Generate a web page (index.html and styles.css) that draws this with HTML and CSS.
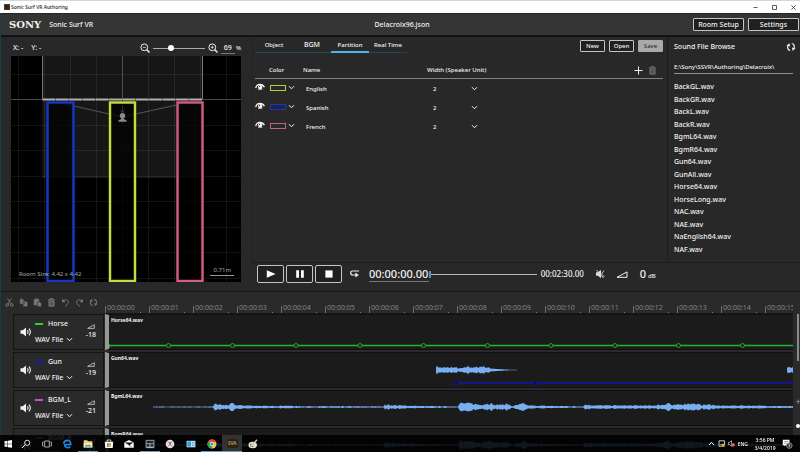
FILE: index.html
```html
<!DOCTYPE html>
<html lang="en">
<head>
<meta charset="utf-8">
<title>Sonic Surf VR Authoring</title>
<link rel="stylesheet" href="styles.css">
</head>
<body>
<svg class="sprite" aria-hidden="true">
  <symbol id="chev" viewBox="0 0 7 7"><path d="M1 2.200 3.500 4.800 6 2.200" fill="none" stroke="currentColor"/></symbol>
  <symbol id="eye" viewBox="0 0 10 8"><path d="M.7 5.200C1.300 2.400 3 1.300 5 1.300S8.600 2.400 9.400 4.200" fill="none" stroke="currentColor" stroke-width="1.300"/><circle cx="5.200" cy="4" r="2.200" fill="currentColor"/><circle cx="4.500" cy="3.400" r=".6" fill="#282828"/><path d="M3 6.300q2 .8 4.500-.2" fill="none" stroke="currentColor" stroke-width=".7"/></symbol>
  <symbol id="trash" viewBox="0 0 8 9"><path d="M.5 1.800h7M2.800 1.500V.6h2.400v.9" fill="none" stroke="currentColor"/><path d="M1 2.500h6V8.600H1z" fill="currentColor"/><path d="M2.700 3.500v4M4 3.500v4M5.300 3.500v4" stroke="#282828" stroke-width=".5"/></symbol>
  <symbol id="refresh" viewBox="0 0 10 10"><path d="M4.200 8.500C1.800 8.200.9 5.400 2.300 3M5.800 1.500C8.200 1.800 9.100 4.600 7.700 7" fill="none" stroke="currentColor" stroke-width="1.200"/><path d="M.5 3.400 3.500 1.200 4 4.500zM9.500 6.600 6.500 8.800 6 5.500z" fill="currentColor"/></symbol>
  <symbol id="speaker" viewBox="0 0 12 10"><path d="M.5 3.200h2.300L6 .6v8.800L2.800 6.800H.5z" fill="currentColor"/><path d="M7.400 3.200q1.300 1.800 0 3.600M9 1.600q2.700 3.400 0 6.800" fill="none" stroke="currentColor" stroke-width="1.100"/></symbol>
  <symbol id="ramp" viewBox="0 0 12 7"><path d="M1 6.300 11 .9v5.400z" fill="none" stroke="currentColor"/></symbol>
  <symbol id="undo" viewBox="0 0 9 9"><path d="M2 2.600C5 1 7.800 2.200 7.300 4.700 7 6.200 5.500 7.400 4 8.200" fill="none" stroke="currentColor"/><path d="M1 .8v3.500h3.500z" fill="currentColor"/></symbol>
</svg>

<header class="titlebar">
  <span class="app-icon"></span>
  <span class="title">Sonic Surf VR Authoring</span>
  <div class="win-controls">
    <button aria-label="Minimize"><svg viewBox="0 0 5 5"><path d="M.5 2.500h4" stroke="#333" stroke-width=".8"/></svg></button>
    <button aria-label="Maximize"><svg viewBox="0 0 5 5"><path d="M.5.5h4v4h-4z" fill="none" stroke="#333" stroke-width=".8"/></svg></button>
    <button aria-label="Close"><svg viewBox="0 0 5 5"><path d="m.4.4 4.200 4.200M4.600.4.4 4.600" stroke="#333" stroke-width=".8"/></svg></button>
  </div>
</header>

<div class="app">
  <div class="brandbar">
    <div class="brand"><span class="logo">SONY</span><span>Sonic Surf VR</span></div>
    <h1>Delacroix96.json</h1>
    <div class="brand-actions"><button class="btn wide">Room Setup</button><button class="btn wide">Settings</button></div>
  </div>

  <main class="workspace">
    <section class="room">
      <div class="room-bar">
        <span class="coords"><span>X: -</span><span>Y: -</span></span>
        <button class="icon-btn" aria-label="Zoom out"><svg class="i10" viewBox="0 0 10 10"><circle cx="4.300" cy="4.300" r="3.400" fill="none" stroke="#eee"/><path d="m6.800 6.800 2.700 2.700" stroke="#eee" stroke-width="1.500"/><path d="M2.800 4.300h3" stroke="#eee" stroke-width=".8"/></svg></button>
        <input class="zoom-range" type="range" min="0" max="100" value="33" aria-label="Zoom">
        <button class="icon-btn" aria-label="Zoom in"><svg class="i10" viewBox="0 0 10 10"><circle cx="4.300" cy="4.300" r="3.400" fill="none" stroke="#eee"/><path d="m6.800 6.800 2.700 2.700" stroke="#eee" stroke-width="1.500"/><path d="M2.800 4.300h3M4.300 2.800v3" stroke="#eee" stroke-width=".8"/></svg></button>
        <input class="zoom-value" id="zoomv" value="69"><label for="zoomv">%</label>
      </div>
      <div class="room-view">
        <svg class="room-map" viewBox="0 0 230 226" preserveAspectRatio="xMidYMid slice">
          <path d="M0 0h230v226H0z"/>
          <path d="M31.500 0h160v122h-160z" fill="#161616"/>
          <path d="M7.500 0v226M33.500 0v226M59.500 0v226M85.500 0v226M111.500 0v226M137.500 0v226M163.500 0v226M189.500 0v226M215.500 0v226M0 18.500h230M0 69.500h230M0 94.500h230M0 120.500h230M0 145.500h230M0 171.500h230M0 196.500h230M0 222.500h230" stroke="#fff" stroke-opacity=".07"/>
          <path d="M0 43.500h230" stroke="#484848"/>
          <path d="M111.500 0v43" stroke="#505050"/>
          <path d="M31.500 43V0M191.500 43V0" stroke="#777" fill="none"/>
          <path d="M31.500 43.500h160" stroke="#b4adb0" stroke-width="2" stroke-dasharray="12.800 .533"/>
          <path d="M50 47 111 61 179 46" fill="none" stroke="#565656"/>
          <path d="M37 46h25v179H37zM99 46h25v179H99zM166 46h25v179h-25z" fill="#000" fill-opacity=".72"/>
          <path d="M36.500 46.500h26v178.500h-26z" fill="none" stroke="#0c1d66" stroke-width="3"/>
          <path d="M36.500 46.500h26v178.500h-26z" fill="none" stroke="#1437c4" stroke-width="2"/>
          <path d="M99 46.500h25v178.500H99z" fill="none" stroke="#5a6a18" stroke-width="3"/>
          <path d="M99 46.500h25v178.500H99z" fill="none" stroke="#bfdf3e" stroke-width="2"/>
          <path d="M166.500 46.500h25v178.500h-25z" fill="none" stroke="#6b2038" stroke-width="3"/>
          <path d="M166.500 46.500h25v178.500h-25z" fill="none" stroke="#d0607f" stroke-width="2"/>
          <path d="M111.500 50v7M109.500 54l2 3 2-3" fill="none" stroke="#333"/>
          <circle cx="111.500" cy="59.800" r="2.700" fill="#8a8a8a"/><path d="M107.500 65.800v-1.600l2.800-1.200v-2h2.400v2l2.800 1.200v1.600z" fill="#8a8a8a"/>
        </svg>
        <span class="room-size">Room Size: 4.42 x 4.42</span>
        <span class="room-scale">0.71m</span>
      </div>
    </section>

    <section class="editor">
      <div class="editor-bar">
        <nav class="tabs"><button>Object</button><button class="big">BGM</button><button class="on">Partition</button><button>Real Time</button></nav>
        <div class="file-actions"><button class="btn">New</button><button class="btn">Open</button><button class="btn save">Save</button></div>
      </div>
      <table class="parts">
        <colgroup><col class="c-eye"><col class="c-color"><col class="c-name"><col class="c-width"><col></colgroup>
        <thead><tr><th></th><th>Color</th><th>Name</th><th>Width (Speaker Unit)</th><th class="row-tools"><button class="icon-btn" aria-label="Add"><svg class="i9" viewBox="0 0 9 9"><path d="M4.500.5v8M.5 4.500h8" stroke="#eee"/></svg></button><button class="icon-btn dim" aria-label="Delete"><svg class="i9"><use href="#trash"/></svg></button></th></tr></thead>
        <tbody>
          <tr><td><button class="icon-btn" aria-label="Show English"><svg class="eye"><use href="#eye"/></svg></button></td><td><button class="swatch lime" aria-label="Color of English"><i></i><svg class="i7"><use href="#chev"/></svg></button></td><td class="d-name">English</td><td class="d-width"><span class="pick"><select aria-label="Width of English"><option>2</option></select><svg class="i7"><use href="#chev"/></svg></span></td><td></td></tr>
          <tr><td><button class="icon-btn" aria-label="Show Spanish"><svg class="eye"><use href="#eye"/></svg></button></td><td><button class="swatch blue" aria-label="Color of Spanish"><i></i><svg class="i7"><use href="#chev"/></svg></button></td><td class="d-name">Spanish</td><td class="d-width"><span class="pick"><select aria-label="Width of Spanish"><option>2</option></select><svg class="i7"><use href="#chev"/></svg></span></td><td></td></tr>
          <tr><td><button class="icon-btn" aria-label="Show French"><svg class="eye"><use href="#eye"/></svg></button></td><td><button class="swatch rose" aria-label="Color of French"><i></i><svg class="i7"><use href="#chev"/></svg></button></td><td class="d-name">French</td><td class="d-width"><span class="pick"><select aria-label="Width of French"><option>2</option></select><svg class="i7"><use href="#chev"/></svg></span></td><td></td></tr>
        </tbody>
      </table>
    </section>

    <aside class="browser">
      <div class="browser-head"><h2>Sound File Browse</h2><button class="icon-btn" aria-label="Refresh"><svg class="i10"><use href="#refresh"/></svg></button></div>
      <input class="path" aria-label="Folder" value="E:\Sony\SSVR\Authoring\Delacroix\">
      <ul class="files"><li>BackGL.wav</li><li>BackGR.wav</li><li>BackL.wav</li><li>BackR.wav</li><li>BgmL64.wav</li><li>BgmR64.wav</li><li>Gun64.wav</li><li>GunAll.wav</li><li>Horse64.wav</li><li>HorseLong.wav</li><li>NAC.wav</li><li>NAE.wav</li><li>NaEnglish64.wav</li><li>NAF.wav</li></ul>
    </aside>

    <section class="transport">
      <button class="btn play" aria-label="Play"><svg class="i10" viewBox="0 0 10 10"><path d="M.8 1.200 9.600 5 .8 8.800z" fill="#fff"/></svg></button>
      <button class="btn play" aria-label="Pause"><svg class="i10" viewBox="0 0 10 10"><path d="M1.200 1.200h2.800v7.600H1.200zM6 1.200h2.800v7.600H6z" fill="#fff"/></svg></button>
      <button class="btn play" aria-label="Stop"><svg class="i10" viewBox="0 0 10 10"><path d="M1.400 1.400h7.200v7.200H1.400z" fill="#fff"/></svg></button>
      <button class="icon-btn loop" aria-label="Loop"><svg class="i10" viewBox="0 0 10 10"><path d="M9 2H2.800Q.7 2 .7 4t2.100 2H6" fill="none" stroke="#eee" stroke-width="1.200"/><path d="M5.400 3.600v4.800L8.800 6z" fill="#eee"/></svg></button>
      <input class="time" aria-label="Position" value="00:00:00.00">
      <input class="seek" type="range" min="0" max="150" value="0" aria-label="Seek">
      <span class="total">00:02:30.00</span>
      <button class="icon-btn mute" aria-label="Mute"><svg class="i10" viewBox="0 0 10 10"><path d="M1 3.200h2L6 .8v8.400L3 6.800H1z" fill="#ddd"/><path d="m1.500 1 7 8M9 1.500 6.500 5 9.500 8" fill="none" stroke="#ddd" stroke-width=".9"/></svg></button>
      <svg class="vol"><use href="#ramp"/></svg>
      <span class="db">0</span><span class="unit">dB</span>
    </section>
  </main>

  <section class="timeline">
    <div class="tl-head">
      <div class="tools">
        <button aria-label="Cut"><svg class="i9" viewBox="0 0 9 9"><path d="M2.500.5 6.200 6M6.500.5 2.800 6" stroke="currentColor"/><circle cx="2.200" cy="7" r="1.300" fill="none" stroke="currentColor"/><circle cx="6.800" cy="7" r="1.300" fill="none" stroke="currentColor"/></svg></button>
        <button aria-label="Copy"><svg class="i9" viewBox="0 0 9 9"><path d="M.8.8h3l1.500 1.500V6.200H.8zM4 3h3l1.700 1.700v4H4z" fill="currentColor" stroke="#292929" stroke-width=".5"/></svg></button>
        <button aria-label="Paste"><svg class="i9" viewBox="0 0 9 9"><path d="M.8 1.300h1.500V.5h2.400v.8h1.500v6H.8z" fill="currentColor"/><path d="M4.200 3.800h2.600l1.800 1.700v3.200H4.200z" fill="currentColor" stroke="#292929" stroke-width=".6"/></svg></button>
        <button aria-label="Delete"><svg class="i9"><use href="#trash"/></svg></button>
        <button aria-label="Undo"><svg class="i9"><use href="#undo"/></svg></button>
        <button aria-label="Redo"><svg class="i9 flip"><use href="#undo"/></svg></button>
        <button aria-label="Repeat"><svg class="i9"><use href="#refresh"/></svg></button>
      </div>
      <ol class="ruler"><li>00:00:00</li><li>00:00:01</li><li>00:00:02</li><li>00:00:03</li><li>00:00:04</li><li>00:00:05</li><li>00:00:06</li><li>00:00:07</li><li>00:00:08</li><li>00:00:09</li><li>00:00:10</li><li>00:00:11</li><li>00:00:12</li><li>00:00:13</li><li>00:00:14</li><li>00:00:15</li></ol>
    </div>
    <div class="tl-body">
      <div class="tracks">
        <article class="track">
          <div class="track-head"><button class="icon-btn" aria-label="Mute Horse"><svg class="spk"><use href="#speaker"/></svg></button>
            <div class="track-info"><span class="track-name"><i class="green"></i>Horse</span><button class="src">WAV File<svg class="i7"><use href="#chev"/></svg></button></div>
            <div class="gain"><svg><use href="#ramp"/></svg>-18</div></div>
          <div class="lane"><span>Horse64.wav</span><svg><path class="marker" d="M0 30q3 2 0 4"/><path d="M0 31.500h4000" stroke="#25b52b" stroke-width="1.500"/><g fill="#152615" stroke="#25a52b"><circle cx="59.500" cy="31.500" r="2"/><circle cx="123.500" cy="31.500" r="2"/><circle cx="187" cy="31.500" r="2"/><circle cx="251" cy="31.500" r="2"/><circle cx="314.500" cy="31.500" r="2"/><circle cx="378.500" cy="31.500" r="2"/><circle cx="442" cy="31.500" r="2"/><circle cx="506" cy="31.500" r="2"/><circle cx="569.500" cy="31.500" r="2"/><circle cx="633.500" cy="31.500" r="2"/></g></svg></div>
        </article>
        <article class="track">
          <div class="track-head"><button class="icon-btn" aria-label="Mute Gun"><svg class="spk"><use href="#speaker"/></svg></button>
            <div class="track-info"><span class="track-name"><i class="navy"></i>Gun</span><button class="src">WAV File<svg class="i7"><use href="#chev"/></svg></button></div>
            <div class="gain"><svg><use href="#ramp"/></svg>-19</div></div>
          <div class="lane"><span>Gun64.wav</span><svg><path class="wave" data-wave="gun"/><path class="wave" data-wave="gunTail"/><path d="M347 31h4000" stroke="#14148a" stroke-width="2"/><circle cx="347" cy="31" r="2" fill="#0c0c50" stroke="#14148a"/><circle cx="426.500" cy="31" r="2" fill="#0c0c50" stroke="#14148a"/></svg></div>
        </article>
        <article class="track">
          <div class="track-head"><button class="icon-btn" aria-label="Mute BGM_L"><svg class="spk"><use href="#speaker"/></svg></button>
            <div class="track-info"><span class="track-name"><i class="pink"></i>BGM_L</span><button class="src">WAV File<svg class="i7"><use href="#chev"/></svg></button></div>
            <div class="gain"><svg><use href="#ramp"/></svg>-21</div></div>
          <div class="lane"><span>BgmL64.wav</span><svg><path class="wave" data-wave="bgm"/></svg></div>
        </article>
        <article class="track">
          <div class="track-head"><button class="icon-btn" aria-label="Mute BGM_R"><svg class="spk"><use href="#speaker"/></svg></button>
            <div class="track-info"><span class="track-name"><i class="pink"></i>BGM_R</span><button class="src">WAV File<svg class="i7"><use href="#chev"/></svg></button></div>
            <div class="gain"><svg><use href="#ramp"/></svg>-21</div></div>
          <div class="lane"><span>BgmR64.wav</span><svg><path class="wave" data-wave="bgm"/></svg></div>
        </article>
      </div>
      <div class="vscroll"><span class="thumb"></span><span class="plus">+</span><span class="knob"></span></div>
    </div>
  </section>
</div>

<footer class="taskbar">
  <div class="apps">
    <button aria-label="Start"><svg viewBox="0 0 10 10"><path d="M1.500 2.300 4.500 1.800v2.900h-3zM5 1.700l4-.6v3.600H5zM1.500 5.200h3v2.900l-3-.5zM5 5.200h4v3.600l-4-.6z" fill="#fff"/></svg></button>
    <button aria-label="Search"><svg viewBox="0 0 10 10"><circle cx="6.200" cy="3.800" r="2.600" fill="none" stroke="#ddd"/><path d="M4.300 5.700 1 9" stroke="#ddd"/></svg></button>
    <button aria-label="Task view"><svg viewBox="0 0 10 10"><path d="M2.700 2h4.600v6H2.700zM1.600 3H.6v4h1M8.400 3h1v4h-1" fill="none" stroke="#bbb" stroke-width=".9"/></svg></button>
    <button aria-label="Edge"><svg viewBox="0 0 10 10"><path d="M2.400 5.700h6.300C8.900 2.900 7.600 1.400 5.300 1.400 3.200 1.400 1.900 2.900 1.500 4.600M2.700 5.200c-.4 3 2.600 4.300 5.600 2.800" fill="none" stroke="#1b86e0" stroke-width="1.700"/></svg></button>
    <button class="open" aria-label="File Explorer"><svg viewBox="0 0 10 10"><path d="M.7 1.300h3.500l.8 1h4.300v6.200H.7z" fill="#f4d374"/><path d="M.7 4h8.600v4.500H.7z" fill="#fbe7a0"/><path d="M2.500 8.700V6h5v2.700H6.300V7.200H3.700v1.500z" fill="#3c9ad8"/></svg></button>
    <button aria-label="Store"><svg viewBox="0 0 10 10"><path d="M.8 2.800h8.400L8.700 9H1.300z" fill="#fff"/><path d="M3.200 2.800V1h3.600v1.800" fill="none" stroke="#fff" stroke-width=".8"/><path d="M3 4.200h1.800v1.700H3z" fill="#e34a2c"/><path d="M5.200 4.200H7v1.700H5.200z" fill="#6ab02c"/><path d="M3 6.300h1.800V8H3z" fill="#2a8fdc"/><path d="M5.200 6.300H7V8H5.200z" fill="#f0b000"/></svg></button>
    <button aria-label="Mail"><svg viewBox="0 0 10 10"><path d="M.3 3.500 5 1l4.700 2.500V8.700H.3z" fill="#fff"/><path d="M.6 3.400h8.800L5.300 6.200z" fill="#111"/><path d="m4.600 5.800 2.800 2" stroke="#111" stroke-width=".6"/></svg></button>
    <button class="open" aria-label="Device panel"><svg viewBox="0 0 10 10"><path d="M.5.800h9v8.400h-9z" fill="#7d868b"/><path d="M1.700 2h6.600v2H1.700z" fill="#22282c"/><circle cx="3" cy="6.300" r="1.200" fill="#25292c"/><circle cx="7" cy="6.300" r="1.200" fill="#25292c"/><path d="M2 8.500h6" stroke="#ddd" stroke-width=".5"/></svg></button>
    <button aria-label="Media tool"><svg viewBox="0 0 10 10"><circle cx="5" cy="5" r="4.300" fill="#e7dfdc"/><path d="M3 2.500 7 7.400M6.900 2.600 3.400 7.200" stroke="#a05048" stroke-width=".8"/><circle cx="5" cy="4" r="1" fill="#777"/></svg></button>
    <button aria-label="Control panel"><svg viewBox="0 0 10 10"><path d="M.6 1.800h8.800v6.500H.6z" fill="#d7effa"/><path d="M1.200 2.400h4v5.200h-4z" fill="#31a2df"/><path d="M6 3.300h2.600M6 5h2.600M6 6.700h2.600" stroke="#31a2df" stroke-width=".9"/></svg></button>
    <button class="open" aria-label="Chrome"><svg viewBox="0 0 10 10"><circle cx="5" cy="5" r="4.500" fill="#f6c632"/><path d="M5 5 1.100 2.750A4.500 4.500 0 0 1 8.900 2.750z" fill="#de4637"/><path d="M5 5 1.100 2.750A4.500 4.500 0 0 0 5 9.500z" fill="#2ba24c"/><circle cx="5" cy="5" r="2.200" fill="#fff"/><circle cx="5" cy="5" r="1.600" fill="#3f82ea"/></svg></button>
    <button class="open current" aria-label="Sonic Surf VR Authoring"><span>SVA</span></button>
    <button aria-label="Paint"><svg viewBox="0 0 10 10"><ellipse cx="4.700" cy="6" rx="4.200" ry="3.200" fill="#e9e5d4"/><circle cx="2.700" cy="5.400" r=".8" fill="#c84c3c"/><circle cx="4.600" cy="7.400" r=".8" fill="#3e8a43"/><circle cx="2.800" cy="7.200" r=".6" fill="#2c74c4"/><path d="M4.500 5.700 9 .8" stroke="#d3c59a" stroke-width="1.500"/></svg></button>
  </div>
  <div class="tray">
    <svg class="i7" viewBox="0 0 7 7"><path d="m1 5 2.500-2.700L6 5" fill="none" stroke="#fff"/></svg>
    <svg class="i7" viewBox="0 0 7 7"><path d="M1 .8h5.500v4H2.300M1 .8v5.500h2" fill="none" stroke="#ddd" stroke-width=".9"/><path d="m5 3.200 2 3.500H3z" fill="#f0c020"/></svg>
    <svg class="i7" viewBox="0 0 7 7"><path d="M.3 2.400h1.200L3.500.7v5.500L1.500 4.600H.3z" fill="none" stroke="#ddd" stroke-width=".7"/><circle cx="5.100" cy="4.800" r="1.900" fill="#dc3030"/><path d="m4.400 4.100 1.400 1.400m0-1.400L4.400 5.500" stroke="#fff" stroke-width=".5"/></svg>
    <span class="lang">ENG</span>
    <span class="clock">3:56 PM<br>3/4/2019</span>
    <svg class="note" viewBox="0 0 11 10"><path d="M.8.8h6.700v5.500H3.600L2.300 7.600V6.300H.8z" fill="#fff"/><path d="M2 2.500h4.300M2 4.200h4.300" stroke="#555" stroke-width=".5"/><circle cx="7.300" cy="6.600" r="2.800" fill="#333" stroke="#ddd" stroke-width=".5"/><path d="m6.600 5.800.8-.6v2.900" fill="none" stroke="#fff" stroke-width=".6"/></svg>
  </div>
</footer>
<script src="script.js"></script>
</body>
</html>
```
FILE: styles.css
```css
* { box-sizing: border-box; margin: 0; padding: 0; }
html, body { height: 100%; }
body {
  display: flex;
  flex-direction: column;
  overflow: hidden;
  background: #282828;
  color: #f2f2f2;
  font: 500 7px/10px "Noto Sans", "Open Sans", sans-serif;
}
button, input, select { font: inherit; color: inherit; background: none; border: 0; outline: 0; border-radius: 0; }
button { display: inline-flex; align-items: center; justify-content: center; }
ul, ol { list-style: none; }
svg { display: block; flex: none; }
h1, h2, th { font: inherit; text-align: left; }
.sprite { position: absolute; width: 0; height: 0; }
.i7 { width: 7px; height: 7px; }
.i9 { width: 9px; height: 9px; }
.i10 { width: 10px; height: 10px; }
.flip { transform: scaleX(-1); }
.btn {
  width: 25px;
  height: 12px;
  border: 1px solid #c4c4c4;
  border-radius: 1px;
  background: #202020;
  font-size: 6px;
}
.btn.wide { width: 51px; height: 13px; font-size: 7px; }
.btn.save { background: #a9a9a9; border-color: #a9a9a9; color: #333; }

.titlebar {
  display: flex;
  align-items: center;
  flex: none;
  height: 13px;
  padding-left: 4px;
  background: #fff;
  border-top: 1px solid #cddae1;
  color: #222;
  font-size: 5px;
}
.app-icon { width: 6px; height: 6px; margin-right: 1px; background: #2c2318; border: 1px solid #4b3c26; }
.win-controls { display: flex; gap: 14px; margin-left: auto; padding-right: 4px; }
.win-controls svg { width: 5px; height: 5px; }

.app { display: flex; flex-direction: column; flex: 1; min-height: 0; border-left: 1px solid #1c3a48; }
.brandbar {
  display: grid;
  grid-template-columns: 1fr auto 1fr;
  align-items: center;
  flex: none;
  height: 24px;
  background: #353535;
  border-top: 1px solid #262626;
  border-bottom: 2px solid #131313;
}
.brandbar h1 { padding-left: 3px; }
.brand { display: flex; align-items: center; gap: 8px; padding-left: 8px; }
.logo { font: bold 10px/10px "DejaVu Serif", serif; }
.brand-actions { display: flex; justify-content: flex-end; gap: 4px; padding-right: 1px; }

.workspace {
  display: grid;
  grid-template-columns: 251px 1fr 133px;
  grid-template-rows: 1fr 29px;
  flex: 1;
  min-height: 0;
}
.room { display: flex; flex-direction: column; grid-row: 1 / 3; min-height: 0; padding: 0 11px 9px 10px; }
.room-bar { display: flex; align-items: center; flex: none; height: 19px; padding-top: 3px; }
.coords { display: flex; gap: 8px; margin-right: auto; padding-left: 2px; }
.room-bar label { font-size: 6px; }
.zoom-range { width: 52px; height: 8px; margin: 0 3px; appearance: none; }
.zoom-range::-webkit-slider-runnable-track { height: 1px; background: #aaa; }
.zoom-range::-webkit-slider-thumb { appearance: none; width: 6px; height: 6px; margin-top: -3px; border-radius: 50%; background: #fff; }
.zoom-value { width: 14px; height: 11px; margin: 0 1px 0 3px; text-align: center; border-bottom: 1px solid #777; }
.room-bar { padding-right: 0; }
.room-view { position: relative; flex: 1; min-height: 0; }
.room-map { width: 100%; height: 100%; }
.room-size, .room-scale { position: absolute; bottom: 3px; color: #aaa; font-size: 6px; font-weight: 400; }
.room-size { left: 8px; }
.room-scale { right: 7px; bottom: 6px; height: 10px; padding: 0 3px; line-height: 9px; border: solid #999; border-width: 0 0 1px; }

.editor { padding: 2px 4px 0 2px; border-left: 1px solid #242424; }
.editor-bar { display: flex; justify-content: space-between; align-items: flex-start; height: 23px; }
.tabs { display: flex; border-bottom: 1px solid #24485a; font-size: 6px; }
.tabs button { width: 38px; height: 14px; padding-bottom: 1px; border-bottom: 2px solid transparent; margin-bottom: -1px; white-space: nowrap; }
.tabs .big { font-size: 7px; }
.tabs .on { border-color: #4fb4e8; }
.file-actions { display: flex; gap: 4px; padding-top: 1px; }
.parts { width: 100%; border-collapse: collapse; table-layout: fixed; font-size: 6px; }
.c-eye { width: 14px; }
.c-color { width: 34px; }
.c-name { width: 124px; }
.c-width { width: 90px; }
.parts th { height: 16px; border-bottom: 1px solid #808080; white-space: nowrap; }
.parts td { height: 19px; }
.parts tbody tr:first-child td { height: 20px; padding-top: 1px; }
.row-tools { padding-right: 6px; }
.parts .row-tools { text-align: right; }
.row-tools button { margin-left: 5px; vertical-align: middle; }
.dim { color: #707070; }
.parts .d-name { padding-left: 3px; }
.parts .d-width { padding-left: 6px; }
.eye { width: 10px; height: 8px; }
.swatch { gap: 2px; padding-left: 1px; }
.swatch i { width: 16px; height: 6px; border: 1px solid; }
.lime i { border-color: #b5cc45; }
.blue i { border-color: #2036a0; background: #1b2350; }
.rose i { border-color: #c06478; }
.pick { display: flex; align-items: center; }
.pick select { width: 45px; height: 10px; margin-right: -7px; appearance: none; }

.browser { display: flex; flex-direction: column; padding: 4px 7px 6px 6px; border-left: 1px solid #1e1e1e; }
.browser-head { display: flex; justify-content: space-between; align-items: center; height: 12px; margin-right: -3px; }
.path { width: 100%; height: 14px; margin: 7px 0; border-bottom: 1px solid #909090; font-size: 6px; }
.files { display: grid; grid-auto-rows: 1fr; align-items: center; flex: 1; }

.transport {
  display: flex;
  align-items: center;
  grid-column: 2 / 4;
  padding: 0 12px 6px 5px;
  border-top: 1px solid #1c1c1c;
}
.btn.play { width: 27px; height: 18px; margin-right: 2px; border-radius: 2px; }
.loop { margin: 0 9px 0 6px; }
.time { width: 60px; height: 15px; flex: none; border-bottom: 1px solid #777; font-size: 11px; }
.seek { flex: 1; min-width: 20px; height: 8px; appearance: none; }
.seek::-webkit-slider-runnable-track { height: 1px; background: #b8b8b8; }
.seek::-webkit-slider-thumb { appearance: none; width: 2px; height: 7px; margin-top: -3px; background: #3f9ccb; }
.total { width: 43px; margin: 0 11px 0 4px; font-size: 8px; }
.vol { width: 12px; height: 7px; margin: 0 12px 0 11px; }
.db { font-size: 11px; }
.unit { width: 140px; flex: none; margin: 4px 0 0 2px; font-size: 6px; }

.timeline { flex: none; height: 161px; overflow: hidden; background: #2a2a2a; border-top: 1px solid #151515; }
.tl-head { display: grid; grid-template-columns: 104px 1fr; height: 22px; margin-right: 7px; }
.tools { display: flex; gap: 5px; padding: 6px 0 0 4px; height: 15px; color: #777; }
.ruler { display: flex; align-items: flex-end; overflow: hidden; color: #858585; font-weight: 400; border-bottom: 1px solid #191919; }
.ruler li {
  flex: none;
  width: 44px;
  height: 9px;
  padding-left: 2px;
  line-height: 8px;
  background:
    linear-gradient(#6c6c6c, #6c6c6c) 0 100% / 1px 7px no-repeat,
    linear-gradient(#777, #777) 35px 100% / 1px 1px no-repeat;
}
.tl-body { display: grid; grid-template-columns: 1fr 7px; }
.tracks { display: flex; flex-direction: column; gap: 2px; padding-left: 12px; }
.track { display: grid; grid-template-columns: 92px 1fr; height: 36px; }
.track-head { display: flex; align-items: center; padding: 0 7px 0 6px; border: 1px solid #151515; margin-right: 1px; }
.spk { width: 12px; height: 10px; }
.track-info { display: flex; flex-direction: column; gap: 6px; align-items: flex-start; margin: 0 auto 0 3px; padding-bottom: 1px; }
.track-info .src { gap: 3px; line-height: 10px; white-space: nowrap; }
.track-name { display: flex; align-items: center; gap: 5px; }
.track-name i { width: 8px; height: 2px; }
.green { background: #2bd32f; }
.navy { background: #1515c8; }
.pink { background: #d44ad0; }
.gain { display: flex; flex-direction: column; align-items: center; gap: 1px; }
.gain svg { width: 8px; height: 5px; }
.lane { position: relative; overflow: hidden; border: solid #101010; border-width: 1px 0; border-left: 4px solid #979797; background: #1b1b1b; }
.lane span { position: absolute; left: 2px; top: 0; font-size: 5px; font-weight: 700; }
.lane svg { width: 100%; height: 36px; margin-top: -1px; }
.wave { fill: #78aef2; }
.marker { fill: #25b52b; }
.vscroll { display: flex; flex-direction: column; align-items: center; padding-left: 3px; }
.thumb { width: 2px; height: 47px; background: #8a8a8a; }
.plus { margin-top: 35px; line-height: 12px; color: #aaa; font-size: 8px; }
.knob { width: 4px; height: 4px; margin-top: 16px; border-radius: 50%; background: #fff; }

.taskbar {
  position: fixed;
  inset: auto 0 0;
  display: flex;
  justify-content: space-between;
  height: 17px;
  background: rgba(0, 0, 0, .87);
  color: #fff;
  font-size: 5px;
}
.apps { display: grid; grid-template-columns: 16px repeat(12, 1fr); width: 263px; }
.apps button { padding-top: 1px; border-bottom: 1px solid transparent; }
.apps svg { width: 10px; height: 10px; }
.apps .open { border-color: #5d9fd0; }
.apps .current { background: #333; }
.current span { padding: 0 1px; background: #2b2116; color: #c9ad6c; line-height: 9px; }
.tray { display: flex; align-items: center; gap: 3px; padding-right: 7px; }
.clock { width: 28px; text-align: center; line-height: 8px; }
.note { width: 11px; height: 10px; }
```
FILE: script.js
```js
// Amplitude envelopes: [x, half height] pairs, in pixels from the start of the lane.
const envelopes = {
  gun: { mid: 18, pts: [[327, 5], [329, 4.5], [332, 3], [345, 3.5], [351, 2], [356, 3], [359, 5], [365, 3], [374, 5], [381, 2.5], [391, 1], [408, 0]] },
  gunTail: { mid: 18, pts: [[678, 3], [680, 5], [684, 3.5]] },
  bgm: { mid: 17, pts: [[44, .5], [104, .6], [105, 4], [115, 2.5], [121, 3], [123, 5], [126, 2.5], [136, 2], [160, 1.2], [175, 1.8], [190, 1], [271, .8], [275, .8], [276, 3], [290, 2], [315, 1.2], [349, .7], [351, 5], [363, 4.5], [371, 3], [381, 5], [386, 2.5], [398, 4], [403, 1], [415, 4.5], [419, 2], [436, 1.5], [474, .8], [476, 3], [490, 2], [510, 2], [540, 1.8], [555, 3], [559, 6], [563, 2], [581, 5], [591, 3], [603, 3], [611, 1.5], [630, 2], [684, 1]] }
};

let seed = 7;
const noise = () => (seed = (seed * 16807) % 2147483647) / 2147483647;

function height(pts, x) {
  let i = 1;
  while (i < pts.length - 1 && pts[i][0] < x) i++;
  const [x0, h0] = pts[i - 1], [x1, h1] = pts[i];
  return h0 + (h1 - h0) * (x - x0) / (x1 - x0);
}

document.querySelectorAll("[data-wave]").forEach(path => {
  const { mid, pts } = envelopes[path.dataset.wave];
  let top = "", bottom = "";
  for (let x = pts[0][0]; x <= pts[pts.length - 1][0]; x++) {
    const h = Math.max(.3, height(pts, x) * (.45 + .55 * noise()));
    top += `L${x} ${(mid - h).toFixed(1)}`;
    bottom = `L${x} ${(mid + h).toFixed(1)}` + bottom;
  }
  path.setAttribute("d", "M" + top.slice(1) + bottom + "Z");
});
```
